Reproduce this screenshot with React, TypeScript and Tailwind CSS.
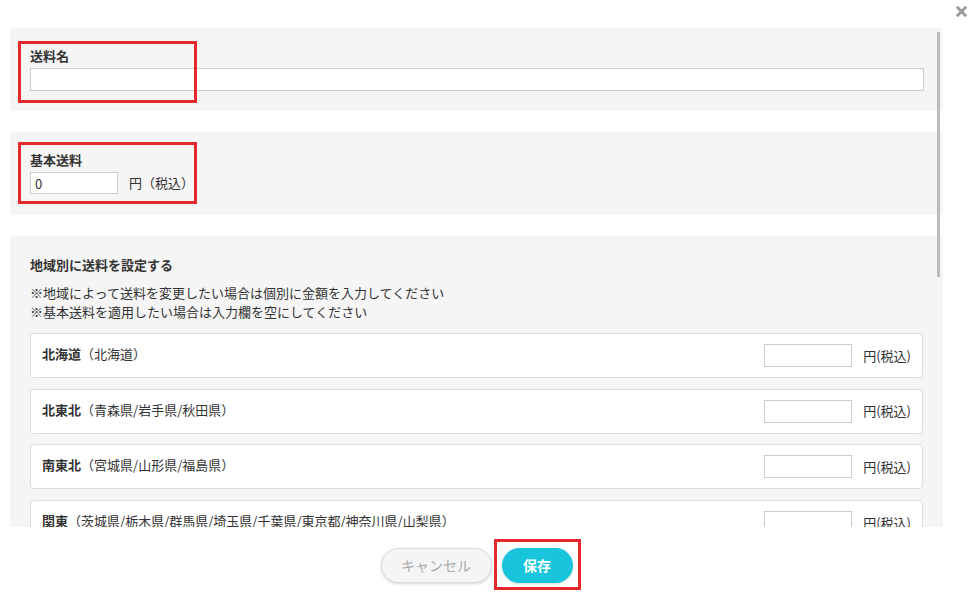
import React from "react";

const regions = [
  { name: "北海道", prefs: "北海道" },
  { name: "北東北", prefs: "青森県/岩手県/秋田県" },
  { name: "南東北", prefs: "宮城県/山形県/福島県" },
  { name: "関東", prefs: "茨城県/栃木県/群馬県/埼玉県/千葉県/東京都/神奈川県/山梨県" },
  { name: "信越", prefs: "新潟県/長野県" },
  { name: "北陸", prefs: "富山県/石川県/福井県" },
];

function CloseIcon() {
  return (
    <svg width="11" height="11" viewBox="0 0 12 12" fill="none">
      <path d="M2 2L10 10M10 2L2 10" stroke="#9a9a9a" strokeWidth="3.2" strokeLinecap="square" />
    </svg>
  );
}

function RegionRow({ name, prefs }: { name: string; prefs: string }) {
  return (
    <div className="flex h-[45px] shrink-0 items-center rounded border border-[#dcdcdc] bg-white pl-[11px] pr-[11px]">
      <div className="mb-[3px] flex-1 text-[13px]">
        <span className="font-bold">{name}</span>
        <span>（{prefs}）</span>
      </div>
      <input className="h-[23px] w-[88px] border border-[#ccc] bg-white px-1 text-[13px] outline-none" />
      <span className="ml-[11px] text-[13px]">円(税込)</span>
    </div>
  );
}

export default function App() {
  return (
    <div
      className="relative h-[600px] w-[975px] overflow-hidden bg-white text-[#333]"
      style={{ fontFamily: '"Noto Sans CJK JP", "Noto Sans", sans-serif' }}
    >
      <button className="absolute right-[8px] top-[6px]">
        <CloseIcon />
      </button>

      <div className="ml-[10px] w-[933px] pt-[28px]">
        <div className="relative h-[499px] overflow-hidden">
          <div className="flex flex-col gap-[21px]">
            {/* 送料名 */}
            <div className="relative rounded bg-[#f5f5f5] px-5 pb-5 pt-[19px]">
              <div className="text-[13px] font-bold leading-[18px]">送料名</div>
              <input className="mt-[3px] block h-[23px] w-[894px] border border-[#ccc] bg-white px-1 text-[13px] outline-none" />
              <div className="pointer-events-none absolute left-[8px] top-[13px] h-[62px] w-[179px] border-[3px] border-[#e5282b]" />
            </div>

            {/* 基本送料 */}
            <div className="relative rounded bg-[#f5f5f5] px-5 pb-[21px] pt-[19px]">
              <div className="text-[13px] font-bold leading-[18px]">基本送料</div>
              <div className="mt-[3px] flex items-center">
                <input
                  defaultValue="0"
                  className="h-[22px] w-[88px] border border-[#ccc] bg-white px-1 text-[13px] outline-none"
                />
                <span className="ml-[11px] text-[13px]">円（税込）</span>
              </div>
              <div className="pointer-events-none absolute left-[8px] top-[10px] h-[62px] w-[179px] border-[3px] border-[#e5282b]" />
            </div>

            {/* 地域別 */}
            <div className="rounded bg-[#f5f5f5] px-5 pb-5 pt-[19px]">
              <div className="text-[13px] font-bold leading-[19px]">地域別に送料を設定する</div>
              <div className="mt-[9px] text-[13px] leading-[19px]">
                <p>※地域によって送料を変更したい場合は個別に金額を入力してください</p>
                <p>※基本送料を適用したい場合は入力欄を空にしてください</p>
              </div>
              <div className="mt-[12px] flex flex-col gap-[10.6px]">
                {regions.map((r) => (
                  <RegionRow key={r.name} name={r.name} prefs={r.prefs} />
                ))}
              </div>
            </div>
          </div>

          {/* scrollbar thumb */}
          <div className="absolute right-[3px] top-[4px] h-[245px] w-[3px] bg-[#bdbdbd]" />
        </div>

        <div className="flex justify-center gap-[10px] pt-[21px]">
          <button className="h-[35px] w-[111px] rounded-full border border-[#dcdcdc] bg-[#f5f5f5] text-[14px] text-[#aaa] shadow-[0_1px_3px_rgba(0,0,0,0.18)]">
            キャンセル
          </button>
          <div className="relative">
            <button className="h-[35px] w-[71px] rounded-full bg-[#18c5dd] text-[14px] font-bold text-white shadow-[0_1px_3px_rgba(0,0,0,0.15)]">
              保存
            </button>
            <div className="pointer-events-none absolute -left-[8px] -right-[8px] -top-[9px] -bottom-[7px] border-[3px] border-[#e5282b]" />
          </div>
        </div>
      </div>
    </div>
  );
}
